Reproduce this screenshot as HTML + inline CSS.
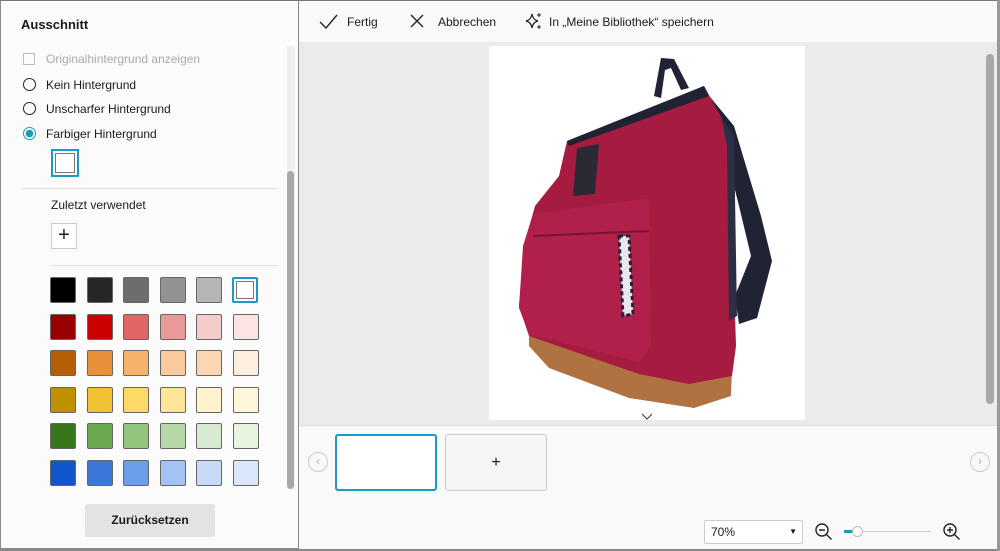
<!DOCTYPE html>
<html><head><meta charset="utf-8"><style>
*{box-sizing:border-box;margin:0;padding:0}
body{width:1000px;height:551px;overflow:hidden;background:#f9f9f9;font-family:"Liberation Sans",sans-serif;font-size:12px;color:#1a1a1a;position:relative}
.abs{position:absolute}
.left{left:0;top:0;width:299px;height:549px;background:#fbfbfb;border:1px solid #8a8a8a;border-top-color:#777}
.sw{position:absolute;width:26px;height:26px;border:1px solid #666;border-radius:2px}
.radio{position:absolute;width:13px;height:13px;border:1.5px solid #222;border-radius:50%}
.t{position:absolute;white-space:nowrap}
</style></head><body>
<div class="abs" style="left:0;top:0;width:1000px;height:1px;background:#777"></div>
<div class="left abs">
 <div class="t" style="left:20px;top:16px;font-size:13px;font-weight:bold">Ausschnitt</div>
 <div class="abs" style="left:22px;top:52px;width:12px;height:12px;border:1px solid #bbb"></div>
 <div class="t" style="left:45px;top:51px;color:#aaa">Originalhintergrund anzeigen</div>
 <div class="radio" style="left:22px;top:77px"></div><div class="t" style="left:45px;top:77px">Kein Hintergrund</div>
 <div class="radio" style="left:22px;top:101px"></div><div class="t" style="left:45px;top:101px">Unscharfer Hintergrund</div>
 <div class="radio" style="left:22px;top:126px;border-color:#1a9bbf;background:radial-gradient(circle,#1a9bbf 3.5px,#fff 4px)"></div><div class="t" style="left:45px;top:126px">Farbiger Hintergrund</div>
 <div class="abs" style="left:50px;top:148px;width:28px;height:28px;border:2px solid #1a9bbf;padding:2px"><div style="width:100%;height:100%;border:1px solid #777;background:#fff"></div></div>
 <div class="abs" style="left:20px;top:187px;width:257px;height:1px;background:#e2e2e2"></div>
 <div class="t" style="left:50px;top:197px">Zuletzt verwendet</div>
 <div class="abs" style="left:50px;top:222px;width:26px;height:26px;border:1px solid #ccc;background:#fff;text-align:center;font-size:20px;line-height:23px">+</div>
 <div class="abs" style="left:50px;top:264px;width:227px;height:1px;background:#e2e2e2"></div>
 <div class="abs" style="left:286px;top:45px;width:8px;height:443px;background:#f0f0f0"></div>
 <div class="abs" style="left:286px;top:170px;width:7px;height:318px;background:#a8a8a8;border-radius:4px"></div>
 <div class="abs" style="left:84px;top:503px;width:130px;height:33px;background:#e3e3e3;border-radius:3px;text-align:center;line-height:33px;font-weight:bold;font-size:12px">Zurücksetzen</div>
</div>
<div id="grid"></div>
<script>
var c=[["#000","#272727","#6d6d6d","#929292","#b5b5b5","#fff"],["#990000","#cc0000","#e06666","#ea9999","#f4cccc","#fde4e4"],["#b45f06","#e69138","#f6b26b","#f9cb9c","#fcd5b4","#fdefe0"],["#bf9000","#f1c232","#ffd966","#ffe599","#fff2cc","#fff6dc"],["#38761d","#6aa84f","#93c47d","#b6d7a8","#d9ead3","#e6f4e0"],["#1155cc","#3c78d8","#6d9eeb","#a4c2f4","#c9daf8","#dbe7fb"]];
var h="";for(var r=0;r<6;r++)for(var k=0;k<6;k++){var x=50+k*36.5,y=277+r*36.5;
if(r==0&&k==5)h+='<div class="sw" style="left:232px;top:277px;border:2px solid #1a9bbf;padding:2px"><div style="width:100%;height:100%;border:1px solid #777;background:#fff"></div></div>';
else h+='<div class="sw" style="left:'+x+'px;top:'+y+'px;background:'+c[r][k]+'"></div>';}
document.getElementById("grid").innerHTML=h;
</script>
<div class="abs" style="left:299px;top:42px;width:698px;height:383px;background:#ebebeb"></div>
<div class="abs" style="left:986px;top:54px;width:8px;height:350px;background:#a8a8a8;border-radius:4px"></div>
<svg class="abs" style="left:319px;top:13px" width="20" height="18"><path d="M1 9l6 6L18 2" fill="none" stroke="#222" stroke-width="1.4"/></svg>
<div class="t" style="left:347px;top:15px">Fertig</div>
<svg class="abs" style="left:410px;top:14px" width="14" height="14"><path d="M1 1l12 12M13 1L1 13" stroke="#222" stroke-width="1.4"/></svg>
<div class="t" style="left:438px;top:15px">Abbrechen</div>
<svg class="abs" style="left:525px;top:12px" width="18" height="18"><path d="M7 2Q8 8 13 9Q8 10 7 16Q6 10 1 9Q6 8 7 2Z" fill="none" stroke="#222" stroke-width="1.2"/><path d="M14 1v4M12 3h4M14 13v4M12 15h4" stroke="#222"/></svg>
<div class="t" style="left:549px;top:15px">In „Meine Bibliothek“ speichern</div>
<div class="abs" style="left:489px;top:46px;width:316px;height:374px;background:#fff"></div>
<svg class="abs" style="left:489px;top:46px" width="316" height="374" viewBox="0 0 316 374">
<path d="M165 50L172 12L185 13L200 42L192 44L182 22L176 24L172 52Z" fill="#1f2333"/>
<path d="M212 40L245 80L272 170L283 215L268 272L250 278L246 250L262 210L250 160L235 100Z" fill="#1f2333"/>
<path d="M40 288L150 318L243 322L242 350L205 362L140 352L60 322L40 300Z" fill="#b07240"/>
<path d="M78 95L160 62L215 40L240 85L247 300L243 330L200 338L150 328L40 290L30 260L35 200L46 160L70 130Z" fill="#a51c40"/>
<path d="M44 168L160 152L162 300L150 316L40 288L30 262L34 200Z" fill="#b0204a"/>
<path d="M78 95L215 40L220 50L80 100Z" fill="#1f2333"/>
<path d="M232 70L245 90L248 270L240 275L238 100Z" fill="#2b2e44"/>
<path d="M88 102L110 98L106 148L84 150Z" fill="#2a2a35"/>
<path d="M130 190l10 0 4 78-10 2Z" fill="#e8e8ee" stroke="#1f2333" stroke-width="3" stroke-dasharray="4 3"/>
<path d="M44 190L160 185" stroke="#7a1530" stroke-width="2"/>
</svg>
<svg class="abs" style="left:641px;top:413px" width="12" height="8"><path d="M1 1l5 5 5-5" fill="none" stroke="#333"/></svg>
<div class="abs" style="left:299px;top:425px;width:698px;height:1px;background:#ddd"></div>
<div class="abs" style="left:308px;top:452px;width:20px;height:20px;border:1px solid #ccc;border-radius:50%;text-align:center;line-height:18px;color:#aaa;font-size:11px">‹</div>
<div class="abs" style="left:970px;top:452px;width:20px;height:20px;border:1px solid #ccc;border-radius:50%;text-align:center;line-height:18px;color:#aaa;font-size:11px">›</div>
<div class="abs" style="left:335px;top:434px;width:102px;height:57px;border:2px solid #1a9bbf;border-radius:3px;background:#fff"></div>
<div class="abs" style="left:445px;top:434px;width:102px;height:57px;border:1px solid #ccc;border-radius:3px;background:#f5f5f5;text-align:center;line-height:55px;font-size:16px">+</div>
<div class="abs" style="left:704px;top:520px;width:99px;height:24px;border:1px solid #ccc;border-radius:2px;background:#fff;padding-left:6px;line-height:22px">70%<span style="position:absolute;right:5px;font-size:8px">▼</span></div>
<svg class="abs" style="left:814px;top:522px" width="20" height="20"><circle cx="8" cy="8" r="6" fill="none" stroke="#222" stroke-width="1.4"/><path d="M5 8h6M12.5 12.5l5 5" stroke="#222" stroke-width="1.4"/></svg>
<div class="abs" style="left:844px;top:531px;width:87px;height:1px;background:#ccc"></div>
<div class="abs" style="left:844px;top:530px;width:12px;height:3px;background:#1a9bbf"></div>
<div class="abs" style="left:852px;top:526px;width:11px;height:11px;border:1px solid #bbb;border-radius:50%;background:#fff"></div>
<svg class="abs" style="left:942px;top:522px" width="20" height="20"><circle cx="8" cy="8" r="6" fill="none" stroke="#222" stroke-width="1.4"/><path d="M5 8h6M8 5v6M12.5 12.5l5 5" stroke="#222" stroke-width="1.4"/></svg>
<div class="abs" style="left:0;top:549px;width:1000px;height:2px;background:#888"></div>
<div class="abs" style="left:997px;top:0;width:3px;height:551px;background:#999"></div>
</body></html>
